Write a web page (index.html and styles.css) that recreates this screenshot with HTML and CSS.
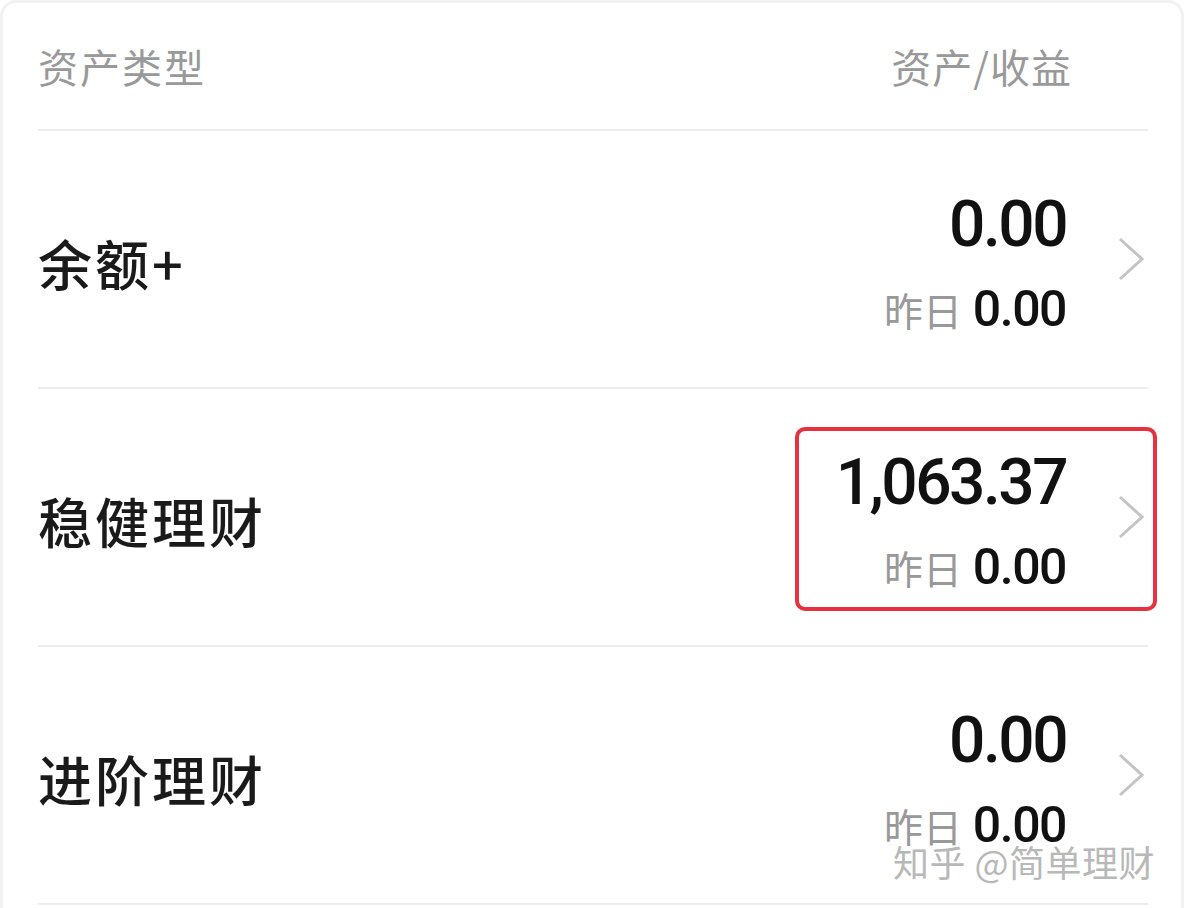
FILE: index.html
```html
<!DOCTYPE html>
<html lang="zh-CN">
<head>
    <meta charset="UTF-8">
    <meta name="viewport" content="width=device-width, initial-scale=1.0">
    <title>资产类型</title>
    <link rel="stylesheet" href="styles.css">
</head>
<body>

<div class="card">
    <div class="list">
        <div class="list-head">
            <span>资产类型</span>
            <span>资产/收益</span>
        </div>

        <div class="row">
            <div class="name">余额+</div>
            <div class="values">
                <div class="amount">0.00</div>
                <div class="yesterday"><span class="label">昨日</span> 0.00</div>
            </div>
            <svg class="chevron" viewBox="0 0 30 46"><path d="M4 3 L26 23 L4 43"/></svg>
        </div>

        <div class="row">
            <div class="name">稳健理财</div>
            <div class="values">
                <div class="amount">1,063.37</div>
                <div class="yesterday"><span class="label">昨日</span> 0.00</div>
            </div>
            <svg class="chevron" viewBox="0 0 30 46"><path d="M4 3 L26 23 L4 43"/></svg>
            <div class="highlight"></div>
        </div>

        <div class="row">
            <div class="name">进阶理财</div>
            <div class="values">
                <div class="amount">0.00</div>
                <div class="yesterday"><span class="label">昨日</span> 0.00</div>
            </div>
            <svg class="chevron" viewBox="0 0 30 46"><path d="M4 3 L26 23 L4 43"/></svg>
        </div>
    </div>

    <div class="watermark">知乎 @简单理财</div>
</div>

</body>
</html>
```

FILE: styles.css
```css
body {
    margin: 0;
    padding: 0;
    background: #fff;
    font-family: "Noto Sans CJK SC", "Noto Sans", sans-serif;
}
.card {
    position: relative;
    height: 908px;
    box-sizing: border-box;
    border: 3px solid #f2f2f2;
    border-bottom: none;
    border-radius: 16px 16px 0 0;
    overflow: hidden;
}
.list {
    margin: 0 33px 0 35px;
}
.list-head {
    display: flex;
    justify-content: space-between;
    align-items: center;
    height: 126px;
    padding-right: 76px;
    border-bottom: 2px solid #ededed;
    font-size: 40px;
    letter-spacing: 2px;
    color: #999;
}
.list-head span:last-child {
    letter-spacing: 1px;
}
.row {
    position: relative;
    display: flex;
    align-items: center;
    height: 256px;
    border-bottom: 2px solid #ededed;
}
.name {
    flex: 1;
    font-size: 54px;
    font-weight: 500;
    letter-spacing: 3px;
    color: #1a1a1a;
    padding-top: 6px;
}
.values {
    text-align: right;
    font-family: Roboto, "Noto Sans", sans-serif;
    font-weight: 500;
    color: #111;
    padding-top: 8px;
}
.amount {
    font-size: 64px;
    line-height: 70px;
    letter-spacing: -2.5px;
}
.yesterday {
    margin-top: 21px;
    font-size: 50px;
    line-height: 56px;
    letter-spacing: -1.5px;
}
.yesterday .label {
    font-family: "Noto Sans CJK SC", sans-serif;
    font-weight: 400;
    font-size: 39px;
    letter-spacing: 0;
    color: #999;
}
.chevron {
    width: 30px;
    height: 46px;
    margin-left: 50px;
    margin-right: 2px;
    fill: none;
    stroke: #c4c4c4;
    stroke-width: 3;
}
.highlight {
    position: absolute;
    left: 757px;
    top: 38px;
    width: 354px;
    height: 176px;
    border: 4px solid #e8313f;
    border-radius: 10px;
}
.watermark {
    position: absolute;
    right: 26px;
    top: 832px;
    font-size: 36px;
    color: #b8b8b8;
    letter-spacing: 0.5px;
    text-shadow: 0 0 2px #fff, 0 0 2px #fff;
}
```
